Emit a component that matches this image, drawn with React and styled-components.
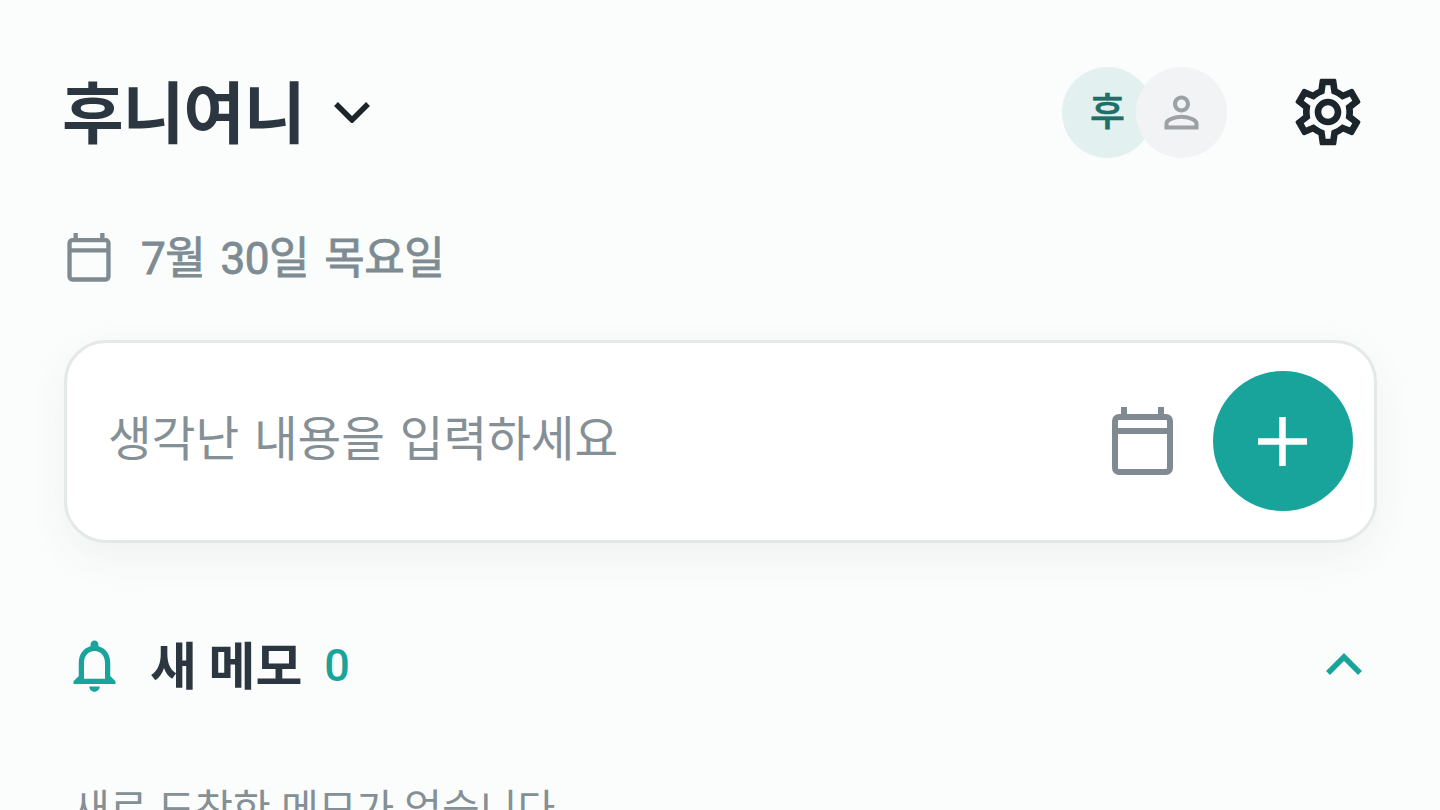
import styled, { createGlobalStyle } from 'styled-components'

const GlobalStyle = createGlobalStyle`
    * { box-sizing: border-box; }
    html, body {
        margin: 0;
        padding: 0;
        background-color: #fbfdfc;
        font-family: Roboto, "Noto Sans CJK KR", sans-serif;
    }
`

export default function App() {
    return (
        <Page>
            <GlobalStyle />
            <Header>
                <TitleGroup>
                    <Title>후니여니</Title>
                    <ChevronDown viewBox="0 0 36 21">
                        <path d="M2 2 L18 18 L34 2" />
                    </ChevronDown>
                </TitleGroup>
                <Avatars>
                    <Avatar $bg="#e2f1ef"><AvatarLabel>후</AvatarLabel></Avatar>
                    <Avatar $bg="#f2f3f5" $overlap>
                        <PersonIcon viewBox="0 0 24 24">
                            <path d="M12 5.9c1.16 0 2.1.94 2.1 2.1s-.94 2.1-2.1 2.1S9.9 9.16 9.9 8s.94-2.1 2.1-2.1m0 9c2.97 0 6.1 1.46 6.1 2.1v1.1H5.9V17c0-.64 3.13-2.1 6.1-2.1M12 4C9.79 4 8 5.79 8 8s1.79 4 4 4 4-1.79 4-4-1.79-4-4-4zm0 9c-2.67 0-8 1.34-8 4v3h16v-3c0-2.66-5.33-4-8-4z" />
                        </PersonIcon>
                    </Avatar>
                </Avatars>
                <GearIcon viewBox="0 0 24 24">
                    <path d="M19.43 12.98c.04-.32.07-.64.07-.98 0-.34-.03-.66-.07-.98l2.11-1.65c.19-.15.24-.42.12-.64l-2-3.46c-.09-.16-.26-.25-.44-.25-.06 0-.12.01-.17.03l-2.49 1c-.52-.4-1.08-.73-1.69-.98l-.38-2.65C14.46 2.18 14.25 2 14 2h-4c-.25 0-.46.18-.49.42l-.38 2.65c-.61.25-1.17.59-1.69.98l-2.49-1c-.06-.02-.12-.03-.18-.03-.17 0-.34.09-.43.25l-2 3.46c-.13.22-.07.49.12.64l2.11 1.65c-.04.32-.07.65-.07.98 0 .33.03.66.07.98l-2.11 1.65c-.19.15-.24.42-.12.64l2 3.46c.09.16.26.25.44.25.06 0 .12-.01.17-.03l2.49-1c.52.4 1.08.73 1.69.98l.38 2.65c.03.24.24.42.49.42h4c.25 0 .46-.18.49-.42l.38-2.65c.61-.25 1.17-.59 1.69-.98l2.49 1c.06.02.12.03.18.03.17 0 .34-.09.43-.25l2-3.46c.12-.22.07-.49-.12-.64l-2.11-1.65zm-1.98-1.71c.04.31.05.52.05.73 0 .21-.02.43-.05.73l-.14 1.13.89.7 1.08.84-.7 1.21-1.27-.51-1.04-.42-.9.68c-.43.32-.84.56-1.25.73l-1.06.43-.16 1.13-.2 1.35h-1.4l-.19-1.35-.16-1.13-1.06-.43c-.43-.18-.83-.41-1.23-.71l-.91-.7-1.06.43-1.27.51-.7-1.21 1.08-.84.89-.7-.14-1.13c-.03-.31-.05-.54-.05-.74s.02-.43.05-.73l.14-1.13-.89-.7-1.08-.84.7-1.21 1.27.51 1.04.42.9-.68c.43-.32.84-.56 1.25-.73l1.06-.43.16-1.13.2-1.35h1.39l.19 1.35.16 1.13 1.06.43c.43.18.83.41 1.23.71l.91.7 1.06-.43 1.27-.51.7 1.21-1.07.85-.89.7.14 1.13zM12 8c-2.21 0-4 1.79-4 4s1.79 4 4 4 4-1.79 4-4-1.79-4-4-4zm0 6c-1.1 0-2-.9-2-2s.9-2 2-2 2 .9 2 2-.9 2-2 2z" />
                </GearIcon>
            </Header>

            <DateRow>
                <CalendarIcon $w={44} $h={49} viewBox="0 0 61 68">
                    <path d="M12 0 V10 M49 0 V10" />
                    <rect x="3.5" y="10" width="54" height="54.5" rx="4" />
                    <path d="M3.5 24 H57.5" />
                </CalendarIcon>
                <DateText>7월 30일 목요일</DateText>
            </DateRow>

            <InputCard>
                <Placeholder>생각난 내용을 입력하세요</Placeholder>
                <CalendarIcon $w={61} $h={68} viewBox="0 0 61 68">
                    <path d="M12 0 V10 M49 0 V10" />
                    <rect x="3" y="10" width="55" height="55" rx="4" />
                    <path d="M3 24 H58" />
                </CalendarIcon>
                <AddButton>
                    <svg width="49" height="49" viewBox="0 0 49 49">
                        <path d="M24.5 0 V49 M0 24.5 H49" stroke="#fff" strokeWidth="6.5" />
                    </svg>
                </AddButton>
            </InputCard>

            <SectionHeader>
                <BellIcon viewBox="0 0 24 24">
                    <path d="M12 22c1.1 0 2-.9 2-2h-4c0 1.1.9 2 2 2zm6-6v-5c0-3.07-1.63-5.64-4.5-6.32V4c0-.83-.67-1.5-1.5-1.5s-1.5.67-1.5 1.5v.68C7.64 5.36 6 7.92 6 11v5l-2 2v1h16v-1l-2-2zm-2 1H8v-6c0-2.48 1.51-4.5 4-4.5s4 2.02 4 4.5v6z" />
                </BellIcon>
                <SectionTitle>새 메모</SectionTitle>
                <Count>0</Count>
                <ChevronUp viewBox="0 0 36 22">
                    <path d="M2 20 L18 4 L34 20" />
                </ChevronUp>
            </SectionHeader>

            <EmptyText>새로 도착한 메모가 없습니다</EmptyText>
        </Page>
    )
}

const Page = styled.div`
    width: 1440px;
    height: 810px;
    overflow: hidden;
    padding: 67px 64px 0;
    background-color: #fbfdfc;
`
const Header = styled.div`
    display: flex;
    align-items: center;
    height: 90px;
`
const TitleGroup = styled.div`
    display: flex;
    align-items: center;
    flex: 1;
`
const Title = styled.h1`
    margin: 0 0 0 -2px;
    padding-bottom: 6px;
    font-family: "Noto Sans CJK KR", sans-serif;
    font-weight: 700;
    font-size: 67px;
    letter-spacing: -1px;
    line-height: 84px;
    color: #2b3640;
`
const ChevronDown = styled.svg`
    width: 36px;
    height: 21px;
    margin-left: 29px;
    fill: none;
    stroke: #1b252b;
    stroke-width: 5.5px;
`
const Avatars = styled.div`
    display: flex;
    margin-right: 61px;
`
const Avatar = styled.div`
    width: 91px;
    height: 91px;
    border-radius: 50%;
    display: flex;
    align-items: center;
    justify-content: center;
    background-color: ${props => props.$bg};
    margin-left: ${props => (props.$overlap ? '-17px' : '0')};
`
const AvatarLabel = styled.span`
    padding-bottom: 7px;
    font-family: "Noto Sans CJK KR", sans-serif;
    font-weight: 500;
    font-size: 38px;
    -webkit-text-stroke: 0.6px #1d6f68;
    color: #1d6f68;
`
const PersonIcon = styled.svg`
    width: 51px;
    height: 51px;
    fill: #9aa2a5;
`
const GearIcon = styled.svg`
    width: 80px;
    height: 80px;
    margin-right: 8px;
    fill: #1b252b;
`
const DateRow = styled.div`
    display: flex;
    align-items: center;
    margin-top: 76px;
    margin-left: 3px;
    height: 49px;
`
const DateText = styled.span`
    margin-left: 30px;
    padding-bottom: 6px;
    font-weight: 400;
    font-size: 44px;
    letter-spacing: -0.4px;
    word-spacing: 4.5px;
    -webkit-text-stroke: 0.9px #7f8b92;
    color: #7f8b92;
`
const CalendarIcon = styled.svg`
    width: ${props => props.$w}px;
    height: ${props => props.$h}px;
    flex-shrink: 0;
    fill: none;
    stroke: #7f8a91;
    stroke-width: 6px;
`
const InputCard = styled.div`
    display: flex;
    align-items: center;
    height: 203px;
    margin: 57.5px -0.5px 0;
    padding: 0 21px 0 41.5px;
    background-color: #fff;
    border: 3px solid #e3e9e8;
    border-radius: 42px;
    box-shadow: 0 14px 40px rgba(40, 60, 60, 0.06);
`
const Placeholder = styled.span`
    flex: 1;
    padding-bottom: 12px;
    font-size: 47.5px;
    word-spacing: 3px;
    color: #859096;
`
const AddButton = styled.div`
    width: 140px;
    height: 140px;
    margin-left: 39.5px;
    border-radius: 50%;
    background-color: #19a49b;
    display: flex;
    align-items: center;
    justify-content: center;
`
const SectionHeader = styled.div`
    display: flex;
    align-items: center;
    height: 64px;
    margin-top: 90.5px;
`
const BellIcon = styled.svg`
    width: 63px;
    height: 63px;
    margin-left: -1px;
    fill: #19a49b;
`
const SectionTitle = styled.span`
    margin-left: 24px;
    padding-bottom: 4px;
    font-family: "Noto Sans CJK KR", sans-serif;
    font-weight: 700;
    font-size: 51px;
    color: #2b3640;
`
const Count = styled.span`
    margin-left: 22px;
    flex: 1;
    font-weight: 500;
    font-size: 45px;
    color: #19a49b;
`
const ChevronUp = styled.svg`
    width: 36px;
    height: 22px;
    margin-right: 14px;
    margin-bottom: 2px;
    fill: none;
    stroke: #19a49b;
    stroke-width: 5.5px;
`
const EmptyText = styled.p`
    margin: 79px 0 0 8px;
    font-size: 41px;
    white-space: nowrap;
    color: #859096;
`
